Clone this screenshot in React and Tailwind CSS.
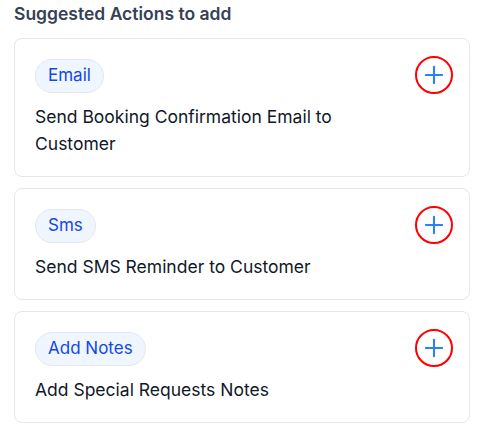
import { Plus } from "lucide-react";

const actions = [
  { tag: "Email", text: "Send Booking Confirmation Email to Customer" },
  { tag: "Sms", text: "Send SMS Reminder to Customer" },
  { tag: "Add Notes", text: "Add Special Requests Notes" },
];

function ActionCard({ tag, text }) {
  return (
    <div className="flex items-start justify-between rounded-lg border border-gray-200 bg-white pl-5 pr-4 pt-5 pb-[19px]">
      <div className="flex flex-col items-start gap-[10px] pr-6">
        <span className="rounded-full border border-gray-200 bg-blue-50 px-3 h-[34px] flex items-center text-[17px] text-blue-700">
          {tag}
        </span>
        <p className="text-[17.5px] leading-[27px] text-gray-900">{text}</p>
      </div>
      <button className="mt-[-3px] flex h-[38px] w-[38px] shrink-0 items-center justify-center rounded-full border-2 border-[#ff0000] text-blue-500">
        <Plus size={28} strokeWidth={1.8} />
      </button>
    </div>
  );
}

export default function App() {
  return (
    <div
      className="min-h-screen bg-white pl-[14px] pr-[17px] pt-[3px]"
      style={{ fontFamily: "Inter, 'Noto Sans', sans-serif" }}
    >
      <h2 className="text-[17.5px] font-semibold leading-[22px] text-gray-700 mb-[13px]">
        Suggested Actions to add
      </h2>
      <div className="flex flex-col gap-[11px]">
        {actions.map((a) => (
          <ActionCard key={a.tag} {...a} />
        ))}
      </div>
    </div>
  );
}
